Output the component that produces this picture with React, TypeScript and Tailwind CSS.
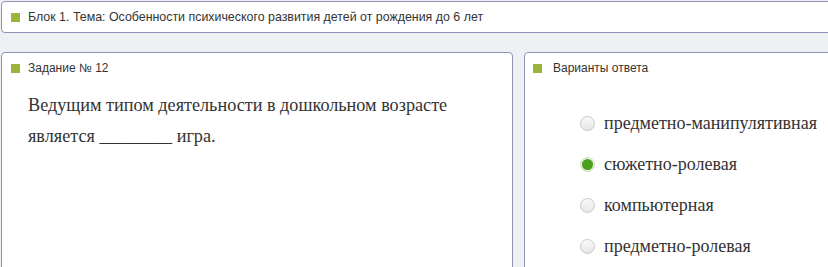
import React from "react";

const answers = [
  { label: "предметно-манипулятивная", checked: false },
  { label: "сюжетно-ролевая", checked: true },
  { label: "компьютерная", checked: false },
  { label: "предметно-ролевая", checked: false },
];

function Marker() {
  return <span className="inline-block w-[9px] h-[9px] bg-[#9bb53a] shrink-0" />;
}

function Radio({ checked }: { checked: boolean }) {
  if (checked) {
    return (
      <span className="w-[15px] h-[15px] rounded-full bg-[#e4f0d8] border border-[#cfe2bd] flex items-center justify-center shrink-0">
        <span className="w-[11px] h-[11px] rounded-full bg-[#4c9e1e]" />
      </span>
    );
  }
  return (
    <span className="w-[15px] h-[15px] rounded-full border border-[#c9c9c9] bg-gradient-to-b from-[#f9f9f9] to-[#e6e6e6] shrink-0" />
  );
}

export default function App() {
  return (
    <div className="w-[828px] h-[267px] overflow-hidden bg-[#eef0f4] pt-px pl-px" style={{ fontFamily: "Arial, 'Liberation Sans', sans-serif" }}>
      <div className="w-[840px] h-[32px] bg-white border border-[#8e91b8] rounded-[4px] flex items-center gap-[8px] pl-[9px]">
        <Marker />
        <span className="text-[12.4px] text-[#333] leading-none">
          Блок 1. Тема: Особенности психического развития детей от рождения до 6 лет
        </span>
      </div>

      <div className="flex gap-[11px] mt-[19px]">
        <div className="w-[512px] h-[240px] shrink-0 bg-white border border-[#8e91b8] rounded-[4px] pl-[9px] pt-[10px]">
          <div className="flex items-center gap-[8px] h-[10px]">
            <Marker />
            <span className="text-[12px] text-[#333] leading-none">Задание № 12</span>
          </div>
          <p
            className="mt-[17px] pl-[17px] text-[18.2px] leading-[31px] text-[#333]"
            style={{ fontFamily: "'Liberation Serif', 'Times New Roman', serif" }}
          >
            Ведущим типом деятельности в дошкольном возрасте
            <br />
            является ________ игра.
          </p>
        </div>

        <div className="w-[320px] h-[240px] shrink-0 bg-white border border-[#8e91b8] rounded-[4px] pl-[8px] pt-[10px]">
          <div className="flex items-center gap-[11px] h-[10px]">
            <Marker />
            <span className="text-[12px] text-[#333] leading-none">Варианты ответа</span>
          </div>
          <div
            className="mt-[39px] pl-[47px] flex flex-col gap-[19px]"
            style={{ fontFamily: "'Liberation Serif', 'Times New Roman', serif" }}
          >
            {answers.map((a) => (
              <div key={a.label} className="flex items-center gap-[9px] h-[22px]">
                <Radio checked={a.checked} />
                <span className="text-[18px] text-[#333] leading-none">{a.label}</span>
              </div>
            ))}
          </div>
        </div>
      </div>
    </div>
  );
}
